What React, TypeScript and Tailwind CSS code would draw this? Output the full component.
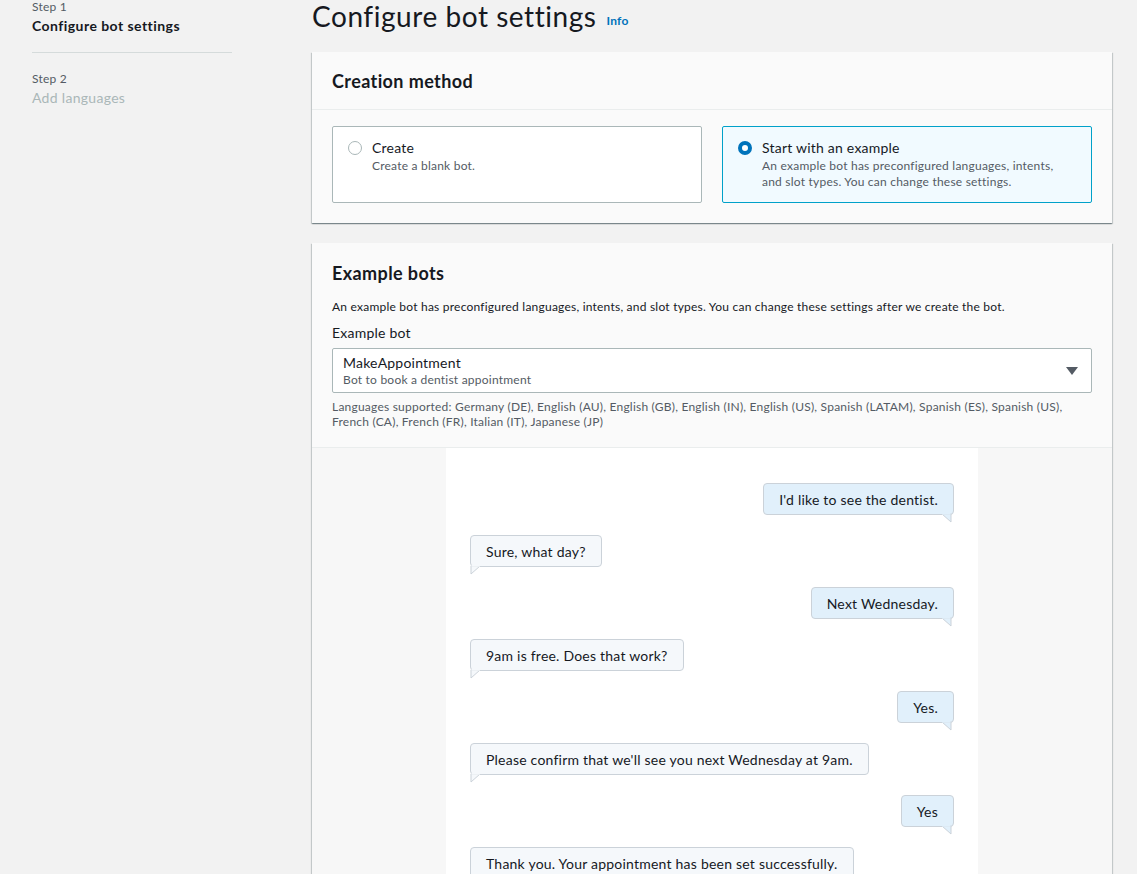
import React from "react";

const font = { fontFamily: "Lato, 'Noto Sans', sans-serif" };

function Bubble({ text, user }: { text: string; user?: boolean }) {
  return (
    <div className={`flex ${user ? "justify-end" : "justify-start"}`}>
      <div className="relative">
        <div
          className={`h-[32px] px-[15px] flex items-center rounded-[4px] border border-[#cbd2d9] text-[14px] tracking-[0.22px] text-[#16191f] ${
            user ? "bg-[#e1f0fb]" : "bg-[#f5f8fb]"
          }`}
        >
          {text}
        </div>
        <svg
          className={`absolute top-[30px] ${user ? "right-[2px]" : "left-[0px]"}`}
          width="10"
          height="10"
          viewBox="0 0 10 10"
        >
          {user ? (
            <path d="M0 1 L9 1 L9 9 Z" fill="#e1f0fb" stroke="#cbd2d9" strokeWidth="1" />
          ) : (
            <path d="M1 1 L10 1 L1 9 Z" fill="#f5f8fb" stroke="#cbd2d9" strokeWidth="1" />
          )}
          {user ? (
            <rect x="0" y="0" width="8.5" height="1.6" fill="#e1f0fb" />
          ) : (
            <rect x="1.5" y="0" width="9" height="1.6" fill="#f5f8fb" />
          )}
        </svg>
      </div>
    </div>
  );
}

export default function App() {
  const msgs: [string, boolean][] = [
    ["I'd like to see the dentist.", true],
    ["Sure, what day?", false],
    ["Next Wednesday.", true],
    ["9am is free. Does that work?", false],
    ["Yes.", true],
    ["Please confirm that we'll see you next Wednesday at 9am.", false],
    ["Yes", true],
    ["Thank you. Your appointment has been set successfully.", false],
  ];
  return (
    <div style={font} className="w-[1137px] h-[874px] overflow-hidden bg-[#f2f2f2] text-[#16191f] flex tracking-[0.22px]">
      {/* Side nav */}
      <div className="w-[312px] shrink-0 pl-[32px]">
        <div className="w-[200px]">
          <div className="text-[12px] text-[#545b64] leading-[14px] mt-[0px]">Step 1</div>
          <div className="text-[14px] font-bold leading-[20px] mt-[2px] tracking-[0.45px]">Configure bot settings</div>
          <div className="border-t border-[#d5dbdb] mt-[16px]" />
          <div className="text-[12px] text-[#545b64] leading-[14px] mt-[19px]">Step 2</div>
          <div className="text-[14px] text-[#aab7b8] leading-[20px] mt-[2px] tracking-[0.3px]">Add languages</div>
        </div>
      </div>

      {/* Main */}
      <div className="w-[800px] shrink-0">
        <div className="h-[52px] flex items-start">
          <h1 className="text-[28px] leading-[34px] text-[#16191f] font-normal -mt-[1px] tracking-[0.55px]">Configure bot settings</h1>
          <span className="text-[12px] font-bold text-[#0073bb] ml-[10px] mt-[12px]">Info</span>
        </div>

        {/* Creation method card */}
        <div className="bg-[#fafafa] shadow-[0_1px_1px_0_rgba(0,28,36,0.3),1px_1px_1px_0_rgba(0,28,36,0.15),-1px_1px_1px_0_rgba(0,28,36,0.15)]">
          <div className="h-[58px] px-[20px] flex items-center border-b border-[#eaeded]">
            <h2 className="text-[18px] font-bold leading-[22px] tracking-[0.4px]">Creation method</h2>
          </div>
          <div className="px-[20px] pt-[16px] pb-[20px] grid grid-cols-2 gap-[20px]">
            <div className="h-[77px] border border-[#aab7b8] rounded-[2px] bg-white flex px-[15px] pt-[12px]">
              <div className="w-[14px] h-[14px] rounded-full border border-[#aab7b8] mt-[2px] shrink-0" />
              <div className="ml-[10px]">
                <div className="text-[14px] leading-[18px]">Create</div>
                <div className="text-[12px] text-[#545b64] leading-[16px] mt-[1px]">Create a blank bot.</div>
              </div>
            </div>
            <div className="h-[77px] border border-[#00a1c9] rounded-[2px] bg-[#f1faff] flex px-[15px] pt-[12px]">
              <div className="w-[14px] h-[14px] rounded-full border-[4px] border-[#0073bb] bg-white mt-[2px] shrink-0" />
              <div className="ml-[10px]">
                <div className="text-[14px] leading-[18px]">Start with an example</div>
                <div className="text-[12px] text-[#545b64] leading-[16px] mt-[1px]">
                  An example bot has preconfigured languages, intents,
                  <br />
                  and slot types. You can change these settings.
                </div>
              </div>
            </div>
          </div>
        </div>

        {/* Example bots card */}
        <div className="mt-[20px] bg-[#fafafa] shadow-[0_1px_1px_0_rgba(0,28,36,0.3),1px_1px_1px_0_rgba(0,28,36,0.15),-1px_1px_1px_0_rgba(0,28,36,0.15)]">
          <div className="px-[20px] pt-[19px] pb-[18px] border-b border-[#eaeded]">
            <h2 className="text-[18px] font-bold leading-[22px] tracking-[0.4px]">Example bots</h2>
            <p className="text-[12px] text-[#16191f] leading-[16px] mt-[15px]">
              An example bot has preconfigured languages, intents, and slot types. You can change these settings after we create the bot.
            </p>
            <div className="text-[14px] leading-[20px] mt-[8px]">Example bot</div>
            <div className="mt-[5px] h-[45px] border border-[#aab7b8] rounded-[2px] bg-white flex items-center pl-[10px] pr-[13px]">
              <div className="flex-1">
                <div className="text-[14px] leading-[18px]">MakeAppointment</div>
                <div className="text-[12px] text-[#545b64] leading-[16px]">Bot to book a dentist appointment</div>
              </div>
              <svg width="12" height="10" viewBox="0 0 12 10">
                <path d="M0 1 L12 1 L6 9 Z" fill="#545b64" />
              </svg>
            </div>
            <div className="text-[12px] text-[#545b64] leading-[15px] mt-[6px]">
              Languages supported: Germany (DE), English (AU), English (GB), English (IN), English (US), Spanish (LATAM), Spanish (ES), Spanish (US),
              <br />
              French (CA), French (FR), Italian (IT), Japanese (JP)
            </div>
          </div>
          <div className="bg-[#f7f7f7] flex justify-center">
            <div className="w-[532px] bg-white px-[24px] pt-[35px] pb-[20px] flex flex-col gap-[20px] h-[430px]">
              {msgs.map(([t, u], i) => (
                <Bubble key={i} text={t} user={u} />
              ))}
            </div>
          </div>
        </div>
      </div>
      <div className="flex-1" />
    </div>
  );
}
